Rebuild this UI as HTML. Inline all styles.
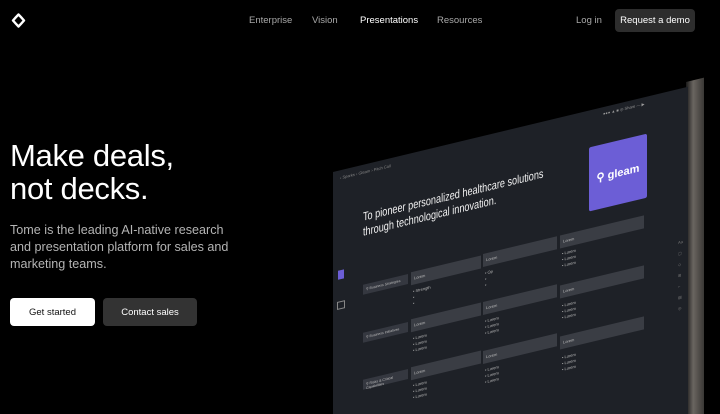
<!DOCTYPE html>
<html style="width:720px;height:414px;overflow:hidden"><head><meta charset="utf-8"><style>
*{margin:0;padding:0;box-sizing:border-box}
body{width:720px;height:414px;background:#000;overflow:hidden;position:relative;font-family:"Liberation Sans",sans-serif;color:#fff}
#w{position:absolute;left:0;top:0;width:720px;height:414px;overflow:hidden}
.nav a{position:absolute;top:15px;font-size:9.5px;color:#a8a8a8;text-decoration:none}
h1{position:absolute;left:10px;top:139px;font-size:31px;font-weight:400;line-height:33px;letter-spacing:-0.3px}
p.sub{position:absolute;left:10px;top:222px;font-size:12.6px;line-height:17px;color:#b4b4b4;width:232px}
.btn{position:absolute;top:298px;height:28px;border-radius:4px;font-size:9.5px;display:flex;align-items:center;justify-content:center}
.scr{position:absolute;left:333px;top:0;width:360px;height:500px;transform:skewY(-13.5deg);transform-origin:0 0}
.t{position:absolute;font-size:4px;color:#bbb}
.hd{position:absolute;height:13px;background:#3a3d44;font-size:4px;color:#bbb;padding:4px 3px}
.lb{position:absolute;height:10px;background:#353840;font-size:3.5px;color:#bbb;padding:3px}
</style></head><body><div id="w">
<svg style="position:absolute;left:11px;top:13px" width="15" height="15" viewBox="0 0 15 15"><path d="M7.5 1.5 Q10 4 13 7.5 Q10 11 7.5 13.5 Q5 11 2 7.5 Q5 4 7.5 1.5 Z" fill="none" stroke="#fff" stroke-width="2.4" stroke-linejoin="round"/></svg>
<div class="nav">
<a style="left:249px">Enterprise</a><a style="left:312px">Vision</a><a style="left:360px;color:#fff">Presentations</a><a style="left:437px">Resources</a><a style="left:576px">Log in</a>
</div>
<div style="position:absolute;left:615px;top:9px;width:80px;height:23px;background:#2d2d2d;border-radius:4px;font-size:9.5px;display:flex;align-items:center;justify-content:center">Request a demo</div>
<h1>Make deals,<br>not decks.</h1>
<p class="sub">Tome is the leading AI-native research and presentation platform for sales and marketing teams.</p>
<div class="btn" style="left:10px;width:85px;background:#fff;color:#111">Get started</div>
<div class="btn" style="left:103px;width:94px;background:#333;color:#fff">Contact sales</div>

<div style="position:absolute;left:686px;top:82px;width:18px;height:340px;background:linear-gradient(90deg,#1a1a1a,#6a6560 40%,#3a3835);transform:skewY(-13.5deg);transform-origin:0 0"></div>
<div class="scr">
 <div style="position:absolute;left:0;top:172px;width:355px;height:328px;background:#1e2127"></div>
 <div class="t" style="left:7px;top:177px;color:#888">‹ Sparks › Gleam › Pitch Call</div>
 <div class="t" style="left:270px;top:176px;color:#999">●●● ▲ ■ ◎ Share — ▶</div>
 <div style="position:absolute;left:30px;top:217px;font-size:12px;line-height:15px;color:#f2f2f2;transform:scaleX(0.76);transform-origin:0 0;white-space:nowrap">To pioneer personalized healthcare solutions<br>through technological innovation.</div>
 <div style="position:absolute;left:256px;top:209px;width:58px;height:64px;background:#6c5ed6;border-radius:2px;display:flex;align-items:center;justify-content:center;font-weight:bold;font-size:11px">⚲ gleam</div>
 <div style="position:absolute;left:5px;top:272px;width:6px;height:9px;background:#6c5ed6"></div>
 <div style="position:absolute;left:4px;top:303px;width:8px;height:8px;border:1px solid #888"></div>
 <div class="lb" style="left:30px;top:292px;width:45px">⚲ Business Strategies</div>
 <div class="lb" style="left:30px;top:340px;width:45px">⚲ Business Initiatives</div>
 <div class="lb" style="left:30px;top:387px;width:45px">⚲ Risks &amp; Critical Capabilities</div>
 <div class="hd" style="left:78px;top:291px;width:70px">Lorem</div>
 <div class="hd" style="left:78px;top:338px;width:70px">Lorem</div>
 <div class="hd" style="left:78px;top:386px;width:70px">Lorem</div>
 <div class="hd" style="left:150px;top:290px;width:74px">Lorem</div>
 <div class="hd" style="left:150px;top:338px;width:74px">Lorem</div>
 <div class="hd" style="left:150px;top:387px;width:74px">Lorem</div>
 <div class="hd" style="left:227px;top:290px;width:84px">Lorem</div>
 <div class="hd" style="left:227px;top:340px;width:84px">Lorem</div>
 <div class="hd" style="left:227px;top:391px;width:84px">Lorem</div>
 <div class="t" style="left:80px;top:308px;line-height:6px">• Strength<br>•<br>•</div>
 <div class="t" style="left:80px;top:355px;line-height:6px">• Lorem<br>• Lorem<br>• Lorem</div>
 <div class="t" style="left:80px;top:402px;line-height:6px">• Lorem<br>• Lorem<br>• Lorem</div>
 <div class="t" style="left:152px;top:307px;line-height:6px">• Op<br>•<br>•</div>
 <div class="t" style="left:152px;top:355px;line-height:6px">• Lorem<br>• Lorem<br>• Lorem</div>
 <div class="t" style="left:152px;top:404px;line-height:6px">• Lorem<br>• Lorem<br>• Lorem</div>
 <div class="t" style="left:229px;top:306px;line-height:6px">• Lorem<br>• Lorem<br>• Lorem</div>
 <div class="t" style="left:229px;top:358px;line-height:6px">• Lorem<br>• Lorem<br>• Lorem</div>
 <div class="t" style="left:229px;top:410px;line-height:6px">• Lorem<br>• Lorem<br>• Lorem</div>
 <div class="t" style="left:345px;top:320px;line-height:11px;color:#777">Aa<br>▢<br>◇<br>⊞<br>⌐<br>▤<br>◎</div>
</div>
</div></body></html>
